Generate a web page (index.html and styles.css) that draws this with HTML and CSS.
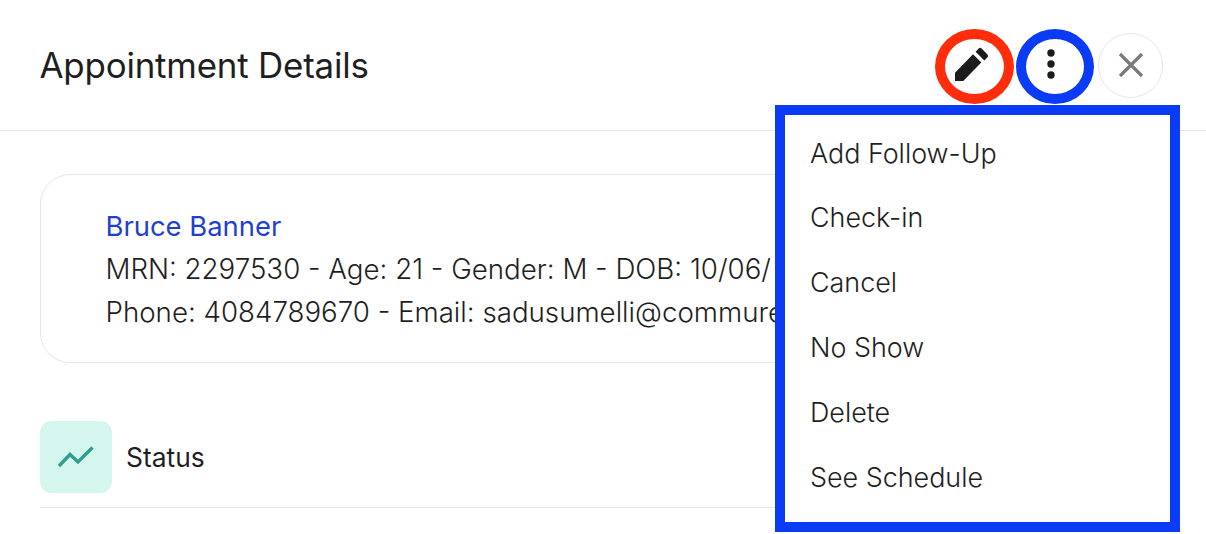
FILE: index.html
```html
<!DOCTYPE html>
<html lang="en">
<head>
<meta charset="utf-8">
<title>Appointment Details</title>
<link rel="stylesheet" href="styles.css">
</head>
<body>
<div class="panel">
  <header class="header">
    <h1 class="title">Appointment Details</h1>
    <div class="actions">
      <button class="icon-btn ring ring-red" aria-label="Edit">
        <svg width="34" height="34" viewBox="0 0 33 33"><path fill="#1c1c1c" d="M0 25 17.500 7 25.500 15 8 33H0ZM20 4.500 23 1.500a2 2 0 0 1 2.800 0L31.500 7.200a2 2 0 0 1 0 2.800L28.500 13Z"/></svg>
      </button>
      <button class="icon-btn ring ring-blue" aria-label="More">
        <svg width="10" height="34" viewBox="0 0 10 34"><circle cx="5" cy="6" r="3.700" fill="#1c1c1c"/><circle cx="5" cy="17" r="3.700" fill="#1c1c1c"/><circle cx="5" cy="28" r="3.700" fill="#1c1c1c"/></svg>
      </button>
      <button class="icon-btn close" aria-label="Close">
        <svg width="26" height="26" viewBox="0 0 26 26"><path d="M2 2 24 24M24 2 2 24" stroke="#7a7a7a" stroke-width="3.200" fill="none"/></svg>
      </button>
    </div>
  </header>
  <main class="body">
    <section class="card">
      <div class="name">Bruce Banner</div>
      <div class="line line-first">MRN: 2297530 - Age: 21 - Gender: M - DOB: 10/06/</div>
      <div class="line">Phone: 4084789670 - Email: sadusumelli@commure</div>
    </section>
    <section class="status">
      <div class="status-icon">
        <svg width="36" height="24" viewBox="0 0 36 24"><path d="M1 21 12 9.500 20 17 34.500 2.500" stroke="#2f9e8f" stroke-width="3.400" fill="none"/></svg>
      </div>
      <span class="status-label">Status</span>
    </section>
  </main>
  <nav class="menu">
    <a class="menu-item">Add Follow-Up</a>
    <a class="menu-item">Check-in</a>
    <a class="menu-item">Cancel</a>
    <a class="menu-item">No Show</a>
    <a class="menu-item">Delete</a>
    <a class="menu-item">See Schedule</a>
  </nav>
</div>
</body>
</html>
```
FILE: styles.css
```css
* { box-sizing: border-box; }
html, body { margin: 0; height: 100%; background: #fff; }
body { font-family: Inter, "Liberation Sans", sans-serif; color: #1f1f1f; overflow: hidden; }
.panel { position: relative; height: 534px; }
.header { height: 131px; padding: 0 43px 0 39.500px; border-bottom: 1px solid #e6e6e6; display: flex; align-items: center; justify-content: space-between; }
.title { margin: 0 0 1px; font-size: 34.900px; font-weight: 400; letter-spacing: -0.2px; }
.actions { display: flex; align-items: center; gap: 2px; }
.icon-btn { display: flex; align-items: center; justify-content: center; padding: 0; background: #fff; border-radius: 50%; }
.ring { width: 79px; height: 75px; margin-top: 3px; border-width: 10px; border-style: solid; padding: 0 9px 5px 0; }
.ring-red { border-color: #ff2d0a; padding-right: 5px; }
.ring-blue { border-color: #0b3cf5; width: 78px; }
.close { width: 65px; height: 65px; border: 1px solid #e6e6e6; margin-left: 2px; }
.body { padding: 43px 40px 0; }
.card { height: 189px; padding: 30px 0 0 64.500px; border: 1px solid #e6e6e6; border-radius: 30px; }
.name { font-size: 27.400px; line-height: 42px; font-weight: 400; color: #1f3fd0; }
.line { width: 669px; font-size: 27.700px; line-height: 43px; font-weight: 300; white-space: nowrap; overflow: hidden; }
.line-first { margin-top: 1px; }
.status { margin-top: 58px; height: 87px; border-bottom: 1px solid #e3e3e3; display: flex; align-items: flex-start; gap: 14px; }
.status-icon { width: 72px; height: 72px; border-radius: 12px; background: #d5f5ef; display: flex; align-items: center; justify-content: center; }
.status-label { font-size: 26.400px; line-height: 73px; }
.menu { position: absolute; left: 775px; top: 105px; width: 405px; height: 427px; padding: 16.600px 25px 0; border: 10px solid #0b3cf5; background: #fff; display: flex; flex-direction: column; }
.menu-item { height: 64.800px; font-size: 26.900px; font-weight: 300; line-height: 43px; }
```
